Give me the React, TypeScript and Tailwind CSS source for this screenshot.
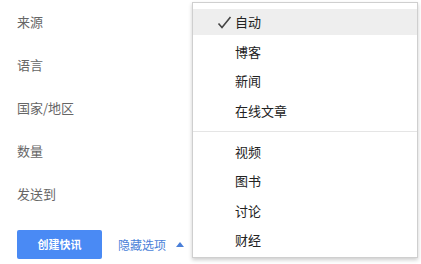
import React from "react";

const font = { fontFamily: '"Noto Sans CJK SC", "Noto Sans", sans-serif' };

function Check() {
  return (
    <svg width="15" height="13" viewBox="0 0 15 13" className="absolute left-[24px] top-[7px]">
      <path d="M1.5 7.5 L5 11.5 L13.5 1" fill="none" stroke="#444" strokeWidth="1.6" />
    </svg>
  );
}

function Item({ label, active }: { label: string; active?: boolean }) {
  return (
    <div
      className={
        "relative flex h-[26px] items-center pl-[42px] text-[13px] text-[#222] " +
        (active ? "bg-[#eeeeee]" : "")
      }
    >
      {active && <Check />}
      <span>{label}</span>
    </div>
  );
}

export default function App() {
  const labels = ["来源", "语言", "国家/地区", "数量", "发送到"];
  return (
    <div className="relative h-[264px] w-[421px] overflow-hidden bg-white" style={font}>
      <div className="flex flex-col pl-[17px] pt-[12px]">
        {labels.map((l) => (
          <div key={l} className="flex h-[43px] items-start text-[13px] leading-[20px] text-[#666]">
            {l}
          </div>
        ))}
        <div className="mt-[3px] flex items-center">
          <button className="flex h-[29px] w-[85px] items-center justify-center rounded-[2px] bg-[#4a8af4] text-[11px] font-bold text-white">
            创建快讯
          </button>
          <span className="ml-[16px] text-[12px] text-[#4a7fd8]">隐藏选项</span>
          <svg width="8" height="5" viewBox="0 0 8 5" className="ml-[10px]">
            <path d="M0 5 L4 0 L8 5 Z" fill="#4a7fd8" />
          </svg>
        </div>
      </div>

      <div className="absolute left-[192px] top-[2px] flex h-[256px] w-[226px] flex-col border border-[#cfcfcf] bg-white pt-[6px] shadow-[0_2px_4px_rgba(0,0,0,0.2)]">
        <div className="flex flex-col gap-[3.6px]">
          <Item label="自动" active />
          <Item label="博客" />
          <Item label="新闻" />
          <Item label="在线文章" />
        </div>
        <div className="mt-[7px] mb-[7px] h-px bg-[#e5e5e5]" />
        <div className="flex flex-col gap-[3.3px]">
          <Item label="视频" />
          <Item label="图书" />
          <Item label="讨论" />
          <Item label="财经" />
        </div>
      </div>
    </div>
  );
}
